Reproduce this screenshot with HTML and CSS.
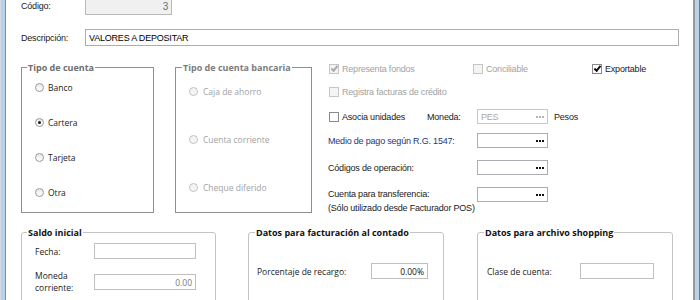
FILE: index.html
```html
<!DOCTYPE html>
<html lang="es">
  <head>
    <meta charset="UTF-8" />
    <title>Cuenta</title>
    <link rel="stylesheet" href="styles.css">
  </head>
  <body>
    <div class="window">
      <div class="frame-left"></div>
      <div class="content">
        <div class="row row-codigo">
          <span class="lbl-top">Código:</span>
          <div class="box box-codigo">3</div>
        </div>
        <div class="row row-desc">
          <span class="lbl-top">Descripción:</span>
          <div class="box box-desc">VALORES A DEPOSITAR</div>
        </div>

        <div class="middle">
          <fieldset class="group group-tipo">
            <legend>Tipo de cuenta</legend>
            <div class="radios radios-tipo">
              <div class="opt"><span class="radio"></span>Banco</div>
              <div class="opt"><span class="radio checked"></span>Cartera</div>
              <div class="opt"><span class="radio"></span>Tarjeta</div>
              <div class="opt"><span class="radio"></span>Otra</div>
            </div>
          </fieldset>

          <fieldset class="group group-banc">
            <legend>Tipo de cuenta bancaria</legend>
            <div class="radios radios-banc">
              <div class="opt"><span class="radio off"></span>Caja de ahorro</div>
              <div class="opt"><span class="radio off"></span>Cuenta corriente</div>
              <div class="opt"><span class="radio off"></span>Cheque diferido</div>
            </div>
          </fieldset>

          <div class="options">
            <div class="row opt-row r1">
              <div class="chk-item w-fondos disabled"><span class="chk off checked"></span>Representa fondos</div>
              <div class="chk-item w-concil disabled"><span class="chk off"></span>Conciliable</div>
              <div class="chk-item"><span class="chk checked"></span>Exportable</div>
            </div>
            <div class="row opt-row r2">
              <div class="chk-item disabled"><span class="chk off"></span>Registra facturas de crédito</div>
            </div>
            <div class="row opt-row r3">
              <div class="chk-item w-asocia"><span class="chk"></span>Asocia unidades</div>
              <span class="lbl-moneda">Moneda:</span>
              <div class="box box-pick box-off">PES<span class="dots"><svg width="8" height="2" viewBox="0 0 8 2"><rect x="0" y="0" width="2" height="2"/><rect x="3" y="0" width="2" height="2"/><rect x="6" y="0" width="2" height="2"/></svg></span></div>
              <span class="pesos">Pesos</span>
            </div>
            <div class="row opt-row r4">
              <span class="lbl-opt lbl-blue">Medio de pago según R.G. 1547:</span>
              <div class="box box-pick"><span class="dots"><svg width="8" height="2" viewBox="0 0 8 2"><rect x="0" y="0" width="2" height="2"/><rect x="3" y="0" width="2" height="2"/><rect x="6" y="0" width="2" height="2"/></svg></span></div>
            </div>
            <div class="row opt-row r5">
              <span class="lbl-opt">Códigos de operación:</span>
              <div class="box box-pick"><span class="dots"><svg width="8" height="2" viewBox="0 0 8 2"><rect x="0" y="0" width="2" height="2"/><rect x="3" y="0" width="2" height="2"/><rect x="6" y="0" width="2" height="2"/></svg></span></div>
            </div>
            <div class="row opt-row r6">
              <span class="lbl-opt lbl-two">Cuenta para transferencia:<br>(Sólo utilizado desde Facturador POS)</span>
              <div class="box box-pick"><span class="dots"><svg width="8" height="2" viewBox="0 0 8 2"><rect x="0" y="0" width="2" height="2"/><rect x="3" y="0" width="2" height="2"/><rect x="6" y="0" width="2" height="2"/></svg></span></div>
            </div>
          </div>
        </div>

        <div class="bottom">
          <fieldset class="group group-soft group-saldo">
            <legend>Saldo inicial</legend>
            <div class="soft-body saldo-body">
              <div class="row soft-row">
                <span class="lbl-soft lbl-saldo">Fecha:</span>
                <div class="box box-fecha"></div>
              </div>
              <div class="row soft-row row-moneda">
                <span class="lbl-soft lbl-saldo lbl-two-soft">Moneda<br>corriente:</span>
                <div class="box box-fecha box-num">0.00</div>
              </div>
            </div>
          </fieldset>

          <fieldset class="group group-soft group-fact">
            <legend>Datos para facturación al contado</legend>
            <div class="soft-body fact-body">
              <div class="row soft-row">
                <span class="lbl-soft lbl-fact">Porcentaje de recargo:</span>
                <div class="box box-pct">0.00%</div>
              </div>
            </div>
          </fieldset>

          <fieldset class="group group-soft group-shop">
            <legend>Datos para archivo shopping</legend>
            <div class="soft-body shop-body">
              <div class="row soft-row">
                <span class="lbl-soft lbl-shop">Clase de cuenta:</span>
                <div class="box box-clase"></div>
              </div>
            </div>
          </fieldset>
        </div>
      </div>
      <div class="frame-right"></div>
    </div>
  </body>
</html>
```

FILE: styles.css
```css
html,
body {
  margin: 0;
  width: 700px;
  height: 300px;
  overflow: hidden;
  background-color: #fff;
  font-family: "Liberation Sans", Arial, sans-serif;
  font-size: 9px;
  letter-spacing: -0.2px;
  color: #1a1a1a;
}
.window {
  display: flex;
  height: 300px;
  overflow: hidden;
}
.frame-left {
  flex: none;
  width: 6px;
  background: linear-gradient(to right, #d3dbe5 0 1px, #b9d1ea 1px 5px, #7d91a8 5px 6px);
}
.frame-right {
  flex: none;
  width: 7px;
  background: linear-gradient(to right, #9a9a9a 0 2px, #b9d1ea 2px 6px, #6a7a8c 6px 7px);
}
.content {
  flex: 1;
  padding-left: 15px;
}
.row {
  display: flex;
  align-items: center;
}

/* top fields */
.row-codigo {
  margin-top: -3px;
  height: 18px;
}
.row-desc {
  margin-top: 14px;
  height: 17px;
}
.lbl-top {
  width: 64px;
  flex: none;
}
.box {
  box-sizing: border-box;
  flex: none;
  height: 17px;
  border: 1px solid #abadb3;
  background-color: #fff;
  padding: 0 3px;
  display: flex;
  align-items: center;
  white-space: nowrap;
}
.box-codigo {
  width: 87px;
  height: 18px;
  background-color: #f0f0f0;
  border-color: #b9b9b9;
  justify-content: flex-end;
  color: #6d6d6d;
  font-size: 10px;
}
.box-desc {
  width: 594px;
  color: #000;
}

/* middle section */
.middle {
  display: flex;
  align-items: flex-start;
  margin-top: 15px;
  height: 152px;
}
.group {
  margin: 0;
  padding: 0;
  min-width: 0;
  box-sizing: border-box;
  border: 1px solid #8e8e8e;
  flex: none;
}
.group legend {
  margin-left: 5px;
  padding: 0 1px;
  font-family: "Open Sans", sans-serif;
  font-weight: bold;
  font-size: 9px;
  letter-spacing: 0;
  line-height: 13px;
  color: #6f6f6f;
}
.group-tipo {
  width: 133px;
  height: 152px;
}
.group-banc {
  width: 137px;
  height: 152px;
  margin-left: 21px;
}
.group-banc legend {
  margin-left: 6px;
  color: #7c7c7c;
}
.radios {
  display: flex;
  flex-direction: column;
  font-family: "Open Sans", sans-serif;
  font-size: 8.5px;
  letter-spacing: 0;
}
.radios-tipo {
  gap: 21px;
  padding: 6px 0 0 13px;
}
.radios-banc {
  gap: 34px;
  padding: 10px 0 0 13px;
  color: #a2a2a2;
}
.opt {
  display: flex;
  align-items: center;
  height: 14px;
  gap: 4px;
}
.radios-banc .opt {
  gap: 5px;
}
.radio {
  box-sizing: border-box;
  width: 9px;
  height: 9px;
  border: 1px solid #999;
  border-radius: 50%;
  background: linear-gradient(#e8e8e8, #fff);
  display: flex;
  align-items: center;
  justify-content: center;
}
.radio.checked::after {
  content: "";
  width: 3px;
  height: 3px;
  border-radius: 50%;
  background-color: #1c1c1c;
}
.radio.off {
  border-color: #c2c2c2;
  background: #f4f4f4;
}

/* options column */
.options {
  margin-left: 16px;
  padding-top: 1px;
  display: flex;
  flex-direction: column;
  color: #1a1a1a;
}
.opt-row {
  height: 15px;
}
.r1 {
  height: 14px;
}
.r2 {
  height: 14px;
  margin-top: 9px;
}
.r3 {
  margin-top: 10px;
}
.r4 {
  margin-top: 9px;
}
.r5,
.r6 {
  margin-top: 12px;
}
.r6 {
  align-items: flex-start;
}
.chk-item {
  display: flex;
  align-items: center;
  gap: 3px;
  padding-left: 1px;
  flex: none;
  white-space: nowrap;
}
.chk-item.disabled {
  color: #a2a2a2;
}
.w-fondos {
  width: 143px;
}
.w-concil {
  width: 118px;
}
.w-asocia {
  width: 98px;
}
.chk {
  box-sizing: border-box;
  width: 10px;
  height: 10px;
  border: 1px solid #8a8a8a;
  background-color: #fff;
  display: flex;
  align-items: center;
  justify-content: center;
}
.chk.off {
  border-color: #c6c6c6;
  background-color: #f4f4f4;
}
.chk.checked::after {
  content: "";
  width: 5px;
  height: 2px;
  margin-top: -2px;
  border-left: 2px solid #111;
  border-bottom: 2px solid #111;
  transform: rotate(-50deg);
}
.chk.off.checked::after {
  border-color: #a8a8a8;
}
.lbl-moneda {
  width: 50px;
  flex: none;
}
.pesos {
  margin-left: 6px;
}
.lbl-opt {
  width: 149px;
  flex: none;
  white-space: nowrap;
}
.lbl-blue {
  color: #24387a;
}
.lbl-two {
  line-height: 14px;
}
.box-pick {
  width: 71px;
  height: 15px;
  padding-right: 0;
}
.box-off {
  color: #a8a8a8;
  border-color: #c8c8c8;
}
.dots {
  margin-left: auto;
  width: 14px;
  height: 13px;
  display: flex;
  align-items: center;
  justify-content: center;
  fill: #111;
}
.box-off .dots {
  fill: #b4b4b4;
}

/* bottom section */
.bottom {
  display: flex;
  margin-top: 13px;
}
.group-soft {
  border-color: #c4c4c4;
  border-radius: 3px;
  height: 90px;
}
.group-soft legend {
  color: #111;
}
.group-saldo {
  width: 195px;
}
.group-fact {
  width: 196px;
  margin-left: 32px;
}
.group-shop {
  width: 196px;
  margin-left: 33px;
}
.group-fact legend,
.group-shop legend {
  margin-left: 6px;
}
.soft-body {
  font-family: "Open Sans", sans-serif;
  font-size: 8.5px;
  letter-spacing: 0;
  color: #1a1a1a;
}
.saldo-body {
  padding: 4px 0 0 13px;
}
.fact-body {
  padding: 24px 0 0 8px;
}
.shop-body {
  padding: 24px 0 0 9px;
}
.soft-row {
  height: 16px;
}
.row-moneda {
  margin-top: 15px;
}
.lbl-soft {
  flex: none;
  white-space: nowrap;
}
.lbl-saldo {
  width: 59px;
}
.lbl-two-soft {
  line-height: 12px;
}
.lbl-fact {
  width: 114px;
}
.lbl-shop {
  width: 93px;
}
.box-fecha {
  width: 102px;
  height: 16px;
  border-color: #c0c0c0;
}
.box-num {
  justify-content: flex-end;
  color: #7a7a7a;
}
.box-pct {
  width: 57px;
  height: 16px;
  border-color: #c0c0c0;
  justify-content: flex-end;
  color: #111;
}
.box-clase {
  width: 74px;
  height: 16px;
  border-color: #c0c0c0;
}
```
